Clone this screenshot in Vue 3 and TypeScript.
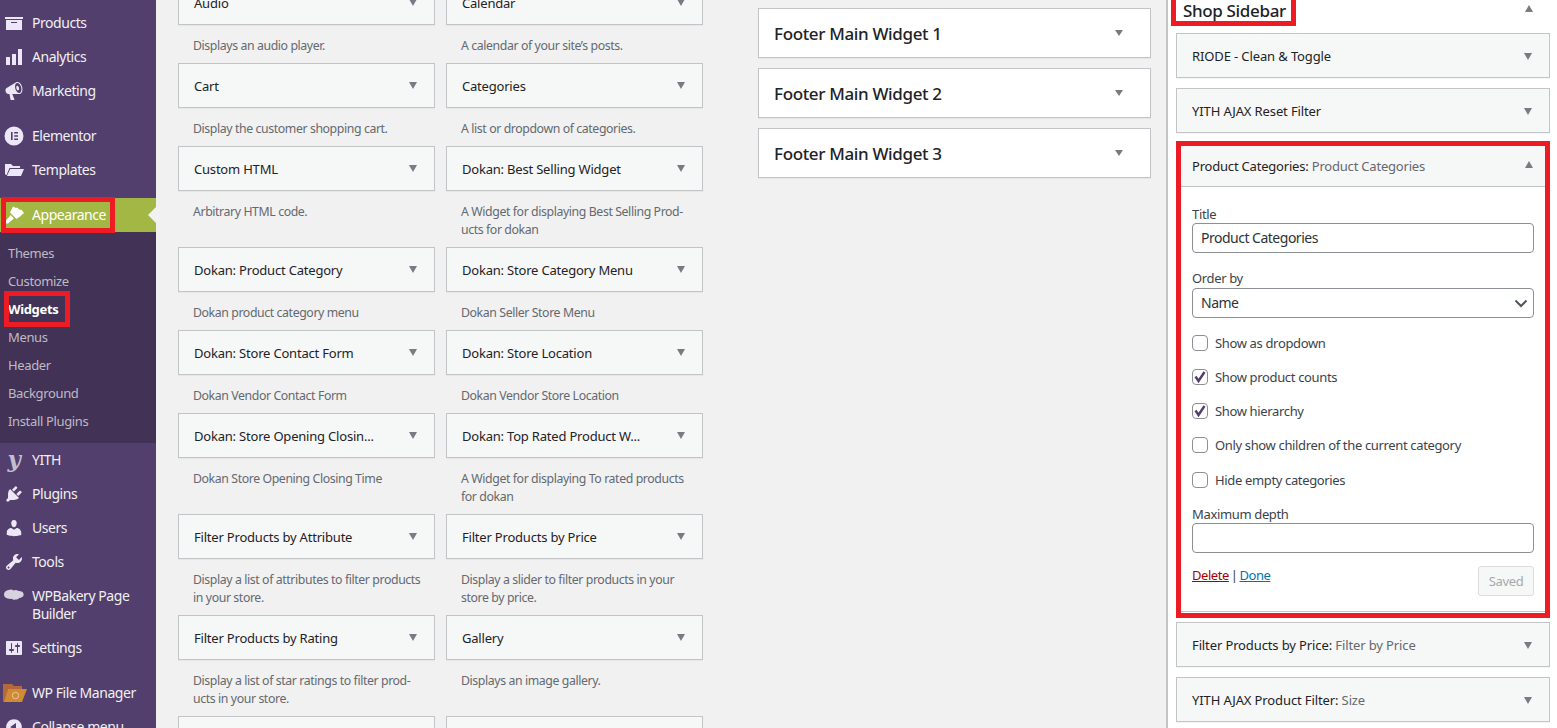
<script setup lang="ts">
interface MenuItem { label: string; icon: string; sep?: boolean; tall?: boolean }
const P: Record<string, string> = {
  products: 'M19 4v2H1V4h18zM2 7h16v10H2V7zm11 3V9H7v1h6z',
  analytics: 'M18 18V2h-4v16h4zm-6 0V7H8v11h4zm-6 0v-8H2v8h4z',
  marketing: 'M18.15 5.94c.46 1.62.38 3.22-.02 4.48-.42 1.28-1.26 2.18-2.3 2.48-.16.06-.26.06-.4.06-.06.02-.12.02-.18.02-.06.02-.14.02-.22.02h-6.8l2.22 5.5c.02.14-.06.26-.14.34-.08.1-.24.16-.34.16H6.95c-.1 0-.26-.06-.34-.16-.08-.08-.16-.2-.14-.34l-1-5.5H4.25l-.02-.02c-.5.06-1.08-.18-1.54-.62s-.88-1.08-1.06-1.88c-.24-.8-.2-1.56-.02-2.2.18-.62.58-1.08 1.06-1.3l.02-.02 9-5.4c.1-.06.18-.1.24-.16.06-.04.14-.08.24-.12.16-.08.28-.12.5-.18 1.04-.3 2.24.1 3.22.98s1.76 2.18 2.22 3.86zm-2.58 5.98h-.02c.4-.1.74-.34 1.04-.7.58-.7.86-1.76.86-3.04 0-.64-.1-1.3-.28-1.98-.34-1.36-1.02-2.5-1.78-3.24s-1.68-1.1-2.46-.88c-.82.22-1.4.96-1.7 2-.32 1.04-.28 2.36.06 3.72.38 1.36 1 2.5 1.8 3.24.78.74 1.62 1.1 2.48.88zm-2.54-7.08c.22-.04.42-.02.62.04.2.08.38.2.56.38.34.34.62.88.78 1.5.16.64.18 1.26.04 1.7-.14.46-.4.78-.78.88-.38.12-.77-.02-1.1-.36-.34-.34-.62-.88-.78-1.5-.16-.64-.18-1.26-.04-1.7.14-.46.42-.78.7-.94z',
  elementor: 'M10 .5a9.5 9.5 0 1 0 0 19 9.5 9.5 0 0 0 0-19zM7 6h1.6v8H7V6zm3.2 0H14v1.6h-3.8V6zm0 3.2H14v1.6h-3.8V9.2zm0 3.2H14V14h-3.8v-1.6z',
  templates: 'M1 4h6l2 2h7v2H5.5L2.6 15H2L1 14V4zm5.2 5H20l-3 7H2.9l3.3-7z',
  appearance: 'M9 1.5L12 3l1-.5L16 5l1.5-.2L20 8l-4 3.500-3.500 2.500L6 7.500zM6.600 10.100l3.300 3.300-5.400 4.600c-1 .8-2 .8-2.700.1s-.5-1.700.3-2.500z',
  yith: '',
  plugins: 'M13.11 4.36L9.87 7.6 8 5.73l3.24-3.24c.35-.34 1.05-.2 1.56.32.52.51.66 1.21.31 1.55zm-8 1.77l.91-1.12 9.01 9.01-1.19.84c-.71.71-2.63 1.16-3.82 1.16H6.14L4.9 17.26c-.59.59-1.54.59-2.12 0-.59-.58-.59-1.53 0-2.12l1.24-1.24v-3.88c0-1.13.4-3.19 1.09-3.89zm7.26 3.97l3.24-3.24c.34-.35 1.04-.21 1.55.31.52.51.66 1.21.31 1.55l-3.24 3.25z',
  users: 'M10 9.25c-2.27 0-2.73-3.44-2.73-3.44C7 4.02 7.82 2 9.97 2c2.16 0 2.98 2.02 2.71 3.81 0 0-.41 3.44-2.68 3.44zm0 2.57L12.72 10c2.39 0 4.52 2.33 4.52 4.53v2.49s-3.65 1.13-7.24 1.13c-3.65 0-7.24-1.13-7.24-1.13v-2.49c0-2.25 1.94-4.48 4.47-4.48z',
  tools: 'M16.68 9.77c-1.34 1.34-3.3 1.67-4.95.99l-5.41 6.52c-.99.99-2.59.99-3.58 0s-.99-2.59 0-3.57l6.52-5.42c-.68-1.65-.35-3.61.99-4.95 1.28-1.28 3.12-1.62 4.72-1.06l-2.89 2.89 2.82 2.82 2.86-2.87c.53 1.58.18 3.39-1.08 4.65zM3.81 16.21c.4.39 1.04.39 1.43 0 .4-.4.4-1.04 0-1.43-.39-.4-1.03-.4-1.43 0-.39.39-.39 1.03 0 1.43z',
  bakery: 'M4.500 3c1.900-.9 3.700-.6 5 .4 1.700-.9 3.700-.6 5 .7 2.600-.1 5.200 1.100 5.200 3.400 0 2.300-2.300 3.500-4.500 3.500-.9 1.300-2.100 1.700-3.200 1.200-1.300 1-3.200.9-4.200-.4C4 12.300 0 10.800 0 7.500 0 5.100 2 3.300 4.500 3z',
  settings: 'M18 16V4c0-.55-.45-1-1-1H3c-.55 0-1 .45-1 1v12c0 .55.45 1 1 1h14c.55 0 1-.45 1-1zM8 11h1c.55 0 1 .45 1 1s-.45 1-1 1H8v1.500c0 .28-.22.5-.5.5s-.5-.22-.5-.5V13H6c-.55 0-1-.45-1-1s.45-1 1-1h1V5.500c0-.28.22-.5.5-.5s.5.22.5.5V11zm5-2h-1c-.55 0-1-.45-1-1s.45-1 1-1h1V5.500c0-.28.22-.5.5-.5s.5.22.5.5V7h1c.55 0 1 .45 1 1s-.45 1-1 1h-1v5.500c0 .28-.22.5-.5.5s-.5-.22-.5-.5V9z',
  collapse: 'M10 2.160c4.330 0 7.840 3.510 7.840 7.840s-3.510 7.840-7.840 7.840S2.160 14.330 2.160 10 5.710 2.160 10 2.160zm2 11.720V6.120L6.180 9.970z',
}
const topMenu: MenuItem[] = [
  { label: 'Products', icon: 'products' },
  { label: 'Analytics', icon: 'analytics' },
  { label: 'Marketing', icon: 'marketing' },
  { label: 'Elementor', icon: 'elementor', sep: true },
  { label: 'Templates', icon: 'templates' },
]
const lowerMenu: MenuItem[] = [
  { label: 'YITH', icon: 'yith' },
  { label: 'Plugins', icon: 'plugins' },
  { label: 'Users', icon: 'users' },
  { label: 'Tools', icon: 'tools' },
  { label: 'WPBakery Page Builder', icon: 'bakery', tall: true },
  { label: 'Settings', icon: 'settings' },
]
const subMenu = ['Themes', 'Customize', 'Widgets', 'Menus', 'Header', 'Background', 'Install Plugins']
const widgets: { t: string; d: string }[] = [
  { t: 'Audio', d: 'Displays an audio player.' },
  { t: 'Calendar', d: 'A calendar of your site’s posts.' },
  { t: 'Cart', d: 'Display the customer shopping cart.' },
  { t: 'Categories', d: 'A list or dropdown of categories.' },
  { t: 'Custom HTML', d: 'Arbitrary HTML code.' },
  { t: 'Dokan: Best Selling Widget', d: 'A Widget for displaying Best Selling Prod-ucts for dokan' },
  { t: 'Dokan: Product Category', d: 'Dokan product category menu' },
  { t: 'Dokan: Store Category Menu', d: 'Dokan Seller Store Menu' },
  { t: 'Dokan: Store Contact Form', d: 'Dokan Vendor Contact Form' },
  { t: 'Dokan: Store Location', d: 'Dokan Vendor Store Location' },
  { t: 'Dokan: Store Opening Closin...', d: 'Dokan Store Opening Closing Time' },
  { t: 'Dokan: Top Rated Product W...', d: 'A Widget for displaying To rated products for dokan' },
  { t: 'Filter Products by Attribute', d: 'Display a list of attributes to filter products in your store.' },
  { t: 'Filter Products by Price', d: 'Display a slider to filter products in your store by price.' },
  { t: 'Filter Products by Rating', d: 'Display a list of star ratings to filter prod-ucts in your store.' },
  { t: 'Gallery', d: 'Displays an image gallery.' },
  { t: '', d: '' },
  { t: '', d: '' },
]
const areas = ['Footer Main Widget 1', 'Footer Main Widget 2', 'Footer Main Widget 3']
const checks = [
  { label: 'Show as dropdown', on: false },
  { label: 'Show product counts', on: true },
  { label: 'Show hierarchy', on: true },
  { label: 'Only show children of the current category', on: false },
  { label: 'Hide empty categories', on: false },
]
</script>

<template>
  <div class="page">
    <aside class="side">
      <nav class="menu">
        <a v-for="m in topMenu" :key="m.label" class="item" :class="{ sep: m.sep }">
          <svg class="ico" viewBox="0 0 20 20"><path :d="P[m.icon]" fill-rule="evenodd" /></svg>
          <span>{{ m.label }}</span>
        </a>
        <a class="item current sep">
          <svg class="ico" viewBox="0 0 20 20"><path :d="P.appearance" /></svg>
          <span>Appearance</span>
          <i class="mark mark-app"></i>
          <i class="pointer"></i>
        </a>
        <div class="sub">
          <a v-for="s in subMenu" :key="s" class="subitem" :class="{ on: s === 'Widgets' }">
            {{ s }}
            <i v-if="s === 'Widgets'" class="mark mark-wid"></i>
          </a>
        </div>
        <a v-for="m in lowerMenu" :key="m.label" class="item" :class="{ tall: m.tall }">
          <span v-if="m.icon === 'yith'" class="ylogo">y</span>
          <svg v-else class="ico" :class="{ bakery: m.icon === 'bakery' }" viewBox="0 0 20 20"><path :d="P[m.icon]" /></svg>
          <span>{{ m.label }}</span>
        </a>
        <a class="item sep">
          <svg class="fm" viewBox="0 0 24 20">
            <path d="M0 1h9l2 2h8v3H5L2 19H0z" fill="#b5693a" />
            <path d="M5 6h19l-5 13H1z" fill="#d08a35" />
            <circle cx="12.500" cy="12.500" r="3.200" fill="none" stroke="#edc88f" stroke-width="1" />
          </svg>
          <span>WP File Manager</span>
        </a>
        <a class="item">
          <svg class="ico" viewBox="0 0 20 20"><path :d="P.collapse" fill-rule="evenodd" /></svg>
          <span>Collapse menu</span>
        </a>
      </nav>
    </aside>

    <section class="available">
      <div class="wgrid">
        <div v-for="(w, i) in widgets" :key="i" class="wcell">
          <div class="wtitle">
            <span>{{ w.t }}</span>
            <i class="tri"></i>
          </div>
          <p class="wdesc">{{ w.d }}</p>
        </div>
      </div>
    </section>

    <section class="areas">
      <div v-for="a in areas" :key="a" class="area">
        <span>{{ a }}</span>
        <i class="tri"></i>
      </div>
    </section>

    <section class="panel">
      <header class="shophead">
        <h2>Shop Sidebar</h2>
        <i class="tri up"></i>
      </header>
      <div class="bar"><b>RIODE - Clean &amp; Toggle</b><i class="tri"></i></div>
      <div class="bar"><b>YITH AJAX Reset Filter</b><i class="tri"></i></div>
      <div class="open">
        <div class="openhead"><b>Product Categories:</b>&nbsp;<span>Product Categories</span><i class="tri up"></i></div>
        <form class="form" @submit.prevent>
          <label class="fld">Title</label>
          <div class="box">Product Categories</div>
          <label class="fld second">Order by</label>
          <div class="box sel">
            <span>Name</span>
            <svg width="16" height="16" viewBox="0 0 16 16"><path d="M2.500 5.500L8 11l5.500-5.500" fill="none" stroke="#50575e" stroke-width="2" /></svg>
          </div>
          <div class="checks">
            <div v-for="c in checks" :key="c.label" class="check">
              <span class="cb">
                <svg v-if="c.on" width="14" height="14" viewBox="0 0 14 14"><path d="M2.500 6.500l3 4.500L11.500 2" fill="none" stroke="#523f6d" stroke-width="2.400" /></svg>
              </span>
              <span>{{ c.label }}</span>
            </div>
          </div>
          <label class="fld third">Maximum depth</label>
          <div class="box"></div>
          <div class="actions">
            <div class="links"><a class="del">Delete</a> | <a class="done">Done</a></div>
            <div class="saved">Saved</div>
          </div>
        </form>
      </div>
      <div class="bar b3"><b>Filter Products by Price:</b>&nbsp;<span>Filter by Price</span><i class="tri"></i></div>
      <div class="bar"><b>YITH AJAX Product Filter:</b>&nbsp;<span>Size</span><i class="tri"></i></div>
    </section>
  </div>
</template>

<style>
html, body { margin: 0; overflow: hidden; }
</style>

<style scoped>
.page {
  display: flex;
  width: 1557px;
  height: 728px;
  overflow: hidden;
  background: #f1f1f1;
  font-family: "Noto Sans", "Open Sans", sans-serif;
  font-size: 13px;
  letter-spacing: -0.35px;
  color: #3c434a;
}
.side { width: 156px; flex: none; background: #523f6d; height: 728px; overflow: hidden; }
.menu { margin-top: 6px; display: flex; flex-direction: column; }
.item {
  position: relative;
  display: flex;
  align-items: center;
  gap: 8px;
  height: 34px;
  padding-left: 4px;
  color: #f0f0f1;
  font-size: 14px;
  line-height: 18px;
  letter-spacing: -0.45px;
  flex: none;
}
.item.sep { margin-top: 11px; }
.item.tall { height: 52px; }
.item.tall span { width: 116px; }
.ico { width: 20px; height: 20px; fill: #ece6f6; flex: none; }
.bakery { fill: #d8d2e0; align-self: flex-start; margin-top: 8px; }
.fm { width: 24px; height: 20px; flex: none; margin-left: -1px; margin-right: -3px; }
.ylogo {
  width: 20px;
  text-align: center;
  font: italic bold 23px/20px "DejaVu Serif", serif;
  color: #c4bccf;
  flex: none;
  margin-top: -3px;
}
.current { background: #a3b745; color: #fff; }
.current .ico { fill: #fff; }
.pointer {
  position: absolute;
  right: 0;
  top: 9px;
  border: 8px solid transparent;
  border-right-color: #f1f1f1;
  border-left-width: 0;
}
.mark { position: absolute; border: 5px solid #ed1c24; box-sizing: border-box; }
.mark-app { left: 1px; top: -1px; width: 114px; height: 36px; }
.mark-wid { left: 4px; top: -4px; width: 66px; height: 36px; }
.sub { background: #413256; padding: 7px 0 8px; display: flex; flex-direction: column; }
.subitem {
  position: relative;
  height: 28px;
  line-height: 28px;
  padding-left: 8px;
  color: rgba(240, 240, 241, 0.72);
  font-size: 13px;
}
.subitem.on { color: #fff; font-weight: 700; }
.available { width: 602px; flex: none; box-sizing: border-box; padding-left: 22px; }
.wgrid {
  margin-top: -20px;
  display: grid;
  grid-template-columns: 257px 257px;
  column-gap: 11px;
}
.wcell { min-width: 0; }
.wtitle {
  position: relative;
  box-sizing: border-box;
  height: 45px;
  display: flex;
  align-items: center;
  padding-left: 15px;
  background: #f6f7f7;
  border: 1px solid #c3c4c7;
  box-shadow: 0 1px 1px rgba(0, 0, 0, 0.04);
  color: #1d2327;
  font-size: 13px;
  letter-spacing: -0.2px;
}
.wdesc { margin: 0; padding: 12px 10px 8px 15px; font-size: 12.3px; letter-spacing: -0.4px; line-height: 18px; color: #646970; }
.tri {
  position: absolute;
  right: 17px;
  top: 18px;
  width: 0;
  height: 0;
  border-left: 4.500px solid transparent;
  border-right: 4.500px solid transparent;
  border-top: 7px solid #787c82;
}
.tri.up { border-top: 0; border-bottom: 7px solid #787c82; }
.areas { width: 393px; flex: none; padding-top: 8px; display: flex; flex-direction: column; gap: 10px; }
.area {
  position: relative;
  box-sizing: border-box;
  height: 50px;
  display: flex;
  align-items: center;
  padding-left: 15px;
  padding-top: 1px;
  background: #fff;
  border: 1px solid #c3c4c7;
  box-shadow: 0 1px 1px rgba(0, 0, 0, 0.04);
  color: #1d2327;
  font-size: 17px;
  font-weight: 500;
}
.area .tri { right: 27px; top: 21px; border-top-width: 6px; }
.panel {
  margin-left: 15px;
  flex: 1;
  min-width: 0;
  background: #fff;
  border-left: 2px solid #c3c4c7;
  box-sizing: border-box;
  padding: 0 7px 0 8px;
}
.shophead { position: relative; height: 33px; margin-top: -6px; padding-top: 6px; box-sizing: content-box; }
.shophead h2 {
  position: relative;
  margin: 0;
  margin-left: -5px;
  width: 125px;
  height: 26px;
  box-sizing: border-box;
  border: 5px solid #ed1c24;
  border-top: 0;
  padding-left: 7px;
  font-size: 17px;
  line-height: 21px;
  font-weight: 500;
  color: #1d2327;
  white-space: nowrap;
}
.shophead .tri { right: 17px; top: 11px; }
.bar, .openhead {
  position: relative;
  display: flex;
  align-items: center;
  box-sizing: border-box;
  height: 45px;
  padding-left: 15px;
  background: #f6f7f7;
  border: 1px solid #c3c4c7;
  color: #646970;
  margin-bottom: 10px;
  box-shadow: 0 1px 1px rgba(0, 0, 0, 0.04);
  letter-spacing: -0.12px;
}
.bar b, .openhead b { font-weight: 400; color: #1d2327; }
.bar .tri { right: 17px; top: 19px; }
.open {
  position: relative;
  box-sizing: border-box;
  height: 477px;
  margin-top: -2px;
  border: 5px solid #ed1c24;
  margin-bottom: 4px;
  background: #fff;
}
.openhead {
  height: 41px;
  border: 0;
  border-bottom: 1px solid #c3c4c7;
  box-shadow: none;
  padding-left: 11px;
  margin: 0;
  letter-spacing: -0.2px;
}
.openhead .tri { right: 12px; top: 15px; }
.form { padding: 0 11px; position: relative; border-bottom: 1px solid #c3c4c7; height: 425px; box-sizing: border-box; }
.fld { display: block; height: 18px; line-height: 18px; padding-top: 18px; box-sizing: content-box; color: #3c434a; }
.fld.second { padding-top: 16px; margin-bottom: 1px; }
.box {
  box-sizing: border-box;
  height: 30px;
  border: 1px solid #8c8f94;
  border-radius: 4px;
  padding: 0 8px;
  line-height: 28px;
  font-size: 14px;
  letter-spacing: -0.5px;
  color: #2c3338;
}
.sel { display: flex; align-items: center; justify-content: space-between; padding-right: 4px; }
.checks { margin-top: 16.600px; display: flex; flex-direction: column; }
.check { display: flex; align-items: center; gap: 7px; height: 16px; margin-bottom: 18.250px; }
.cb {
  box-sizing: border-box;
  width: 16px;
  height: 16px;
  border: 1px solid #8c8f94;
  border-radius: 4px;
  background: #fff;
  display: flex;
  align-items: center;
  justify-content: center;
  flex: none;
}
.fld.third { padding-top: 0; margin-top: -0.850px; }
.actions { display: flex; justify-content: space-between; align-items: flex-start; margin-top: 13px; }
.links { line-height: 18px; color: #3c434a; letter-spacing: -0.45px; word-spacing: -1px; }
.del { color: #a00; text-decoration: underline; }
.done { color: #0073aa; text-decoration: underline; }
.saved {
  box-sizing: border-box;
  width: 56px;
  height: 30px;
  border: 1px solid #dcdcde;
  border-radius: 3px;
  background: #f6f7f7;
  color: #a7aaad;
  line-height: 28px;
  text-align: center;
}
</style>
